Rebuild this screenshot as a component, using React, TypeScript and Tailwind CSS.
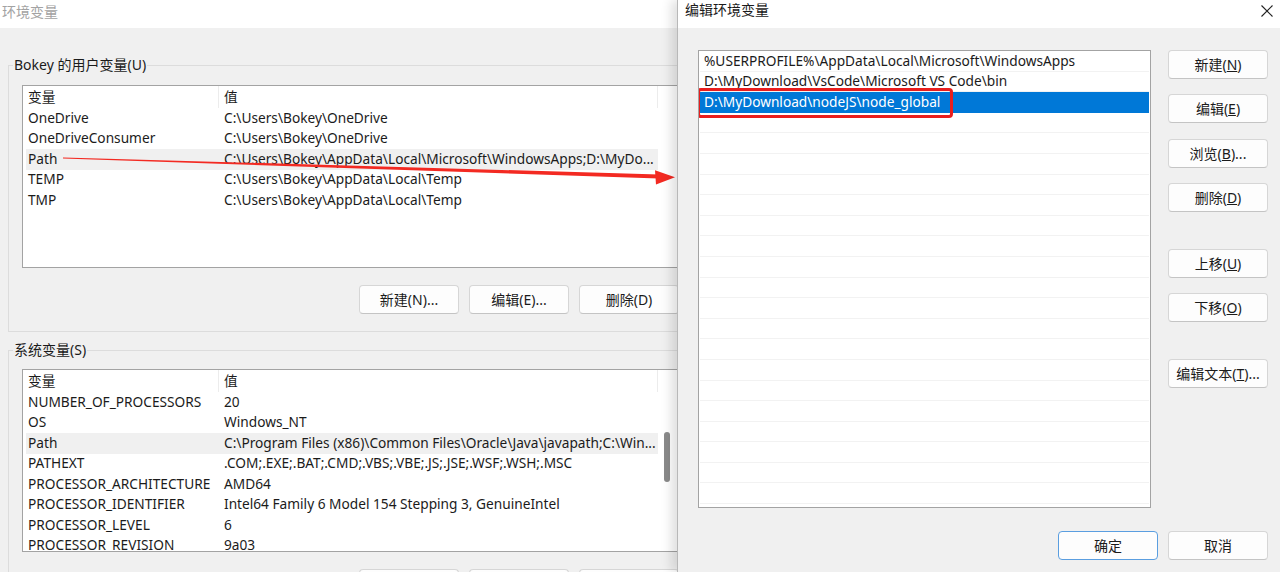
import React from "react";

type Row = { name: string; value: string; hover?: boolean };

const userVars: Row[] = [
  { name: "OneDrive", value: "C:\\Users\\Bokey\\OneDrive" },
  { name: "OneDriveConsumer", value: "C:\\Users\\Bokey\\OneDrive" },
  {
    name: "Path",
    value: "C:\\Users\\Bokey\\AppData\\Local\\Microsoft\\WindowsApps;D:\\MyDo...",
    hover: true,
  },
  { name: "TEMP", value: "C:\\Users\\Bokey\\AppData\\Local\\Temp" },
  { name: "TMP", value: "C:\\Users\\Bokey\\AppData\\Local\\Temp" },
];

const systemVars: Row[] = [
  { name: "NUMBER_OF_PROCESSORS", value: "20" },
  { name: "OS", value: "Windows_NT" },
  {
    name: "Path",
    value: "C:\\Program Files (x86)\\Common Files\\Oracle\\Java\\javapath;C:\\Win...",
    hover: true,
  },
  { name: "PATHEXT", value: ".COM;.EXE;.BAT;.CMD;.VBS;.VBE;.JS;.JSE;.WSF;.WSH;.MSC" },
  { name: "PROCESSOR_ARCHITECTURE", value: "AMD64" },
  { name: "PROCESSOR_IDENTIFIER", value: "Intel64 Family 6 Model 154 Stepping 3, GenuineIntel" },
  { name: "PROCESSOR_LEVEL", value: "6" },
  { name: "PROCESSOR_REVISION", value: "9a03" },
];

const pathEntries = [
  "%USERPROFILE%\\AppData\\Local\\Microsoft\\WindowsApps",
  "D:\\MyDownload\\VsCode\\Microsoft VS Code\\bin",
  "D:\\MyDownload\\nodeJS\\node_global",
];

const WinButton = ({
  children,
  className = "",
  primary = false,
}: {
  children: React.ReactNode;
  className?: string;
  primary?: boolean;
}) => (
  <div
    className={[
      "flex h-[29px] w-[100px] shrink-0 items-center justify-center rounded-[4px] border bg-[#fdfdfd] text-[14px] text-[#1b1b1b]",
      primary ? "border-[#5a9ee0]" : "border-[#d6d6d6] border-b-[#c4c4c4]",
      className,
    ].join(" ")}
  >
    {children}
  </div>
);

const VarList = ({ rows, scrollbar }: { rows: Row[]; scrollbar?: boolean }) => (
  <div className="ml-[13px] flex h-[183px] w-[700px] overflow-hidden border border-[#a3a3a3] bg-white text-[13.7px]">
    <div className="w-[635px] shrink-0">
      <div className="flex h-[22px] items-center">
        <div className="h-full w-[196px] border-r border-[#ececec] pl-[5px] leading-[21px]">变量</div>
        <div className="h-full flex-1 border-r border-[#ececec] pl-[5px] leading-[21px]">值</div>
      </div>
      {rows.map((row) => (
        <div
          key={row.name}
          className={[
            "ml-[3px] flex h-[20.5px] items-center whitespace-nowrap",
            row.hover ? "bg-[#f0f0f0]" : "",
          ].join(" ")}
        >
          <div className="w-[193px] shrink-0 pl-[2px]">{row.name}</div>
          <div className="pl-[5px]">{row.value}</div>
        </div>
      ))}
    </div>
    <div className="w-[17px] shrink-0 pl-[6px] pt-[62px]">
      {scrollbar && <div className="h-[50px] w-[6px] rounded-full bg-[#8a8a8a]" />}
    </div>
  </div>
);

const LeftButtons = () => (
  <div className="mt-[17px] flex gap-[10px] pl-[350px]">
    <WinButton className="h-[28px]">新建(N)...</WinButton>
    <WinButton className="h-[28px]">编辑(E)...</WinButton>
    <WinButton className="h-[28px]">删除(D)</WinButton>
  </div>
);

export default function App() {
  return (
    <div className="relative flex h-[572px] w-[1280px] overflow-hidden bg-[#f0f0f0] font-['Noto_Sans','Noto_Sans_CJK_SC',sans-serif] text-[14px] text-[#1b1b1b]">
      {/* 环境变量 (inactive window behind) */}
      <div className="flex h-full w-[677px] shrink-0 flex-col overflow-hidden">
        <div className="h-[28px] shrink-0 bg-white pl-[2px] pt-[2px] leading-[20px] text-[#a3a3a3]">
          环境变量
        </div>
        <div className="flex flex-col pl-[8px] pt-[27px]">
          <fieldset className="w-[720px] border border-[#dcdcdc] pb-[17px]">
            <legend className="ml-[4px] px-[1px] leading-[20px]">Bokey 的用户变量(U)</legend>
            <div className="mt-[10px]">
              <VarList rows={userVars} />
            </div>
            <LeftButtons />
          </fieldset>
          <fieldset className="mt-[8px] w-[720px] border border-[#dcdcdc] pb-[17px]">
            <legend className="ml-[4px] px-[1px] leading-[20px]">系统变量(S)</legend>
            <div className="mt-[9px]">
              <VarList rows={systemVars} scrollbar />
            </div>
            <LeftButtons />
          </fieldset>
        </div>
      </div>

      <svg
        className="pointer-events-none absolute left-0 top-0"
        width="1280"
        height="572"
        viewBox="0 0 1280 572"
      >
        <polygon points="63,157.4 63,158.6 659,178.6 659,174.4" fill="#f32a22" />
        <polygon points="655,170.2 675,177.2 656,184.6" fill="#f32a22" />
      </svg>

      {/* 编辑环境变量 (active dialog) */}
      <div className="relative flex h-full flex-1 flex-col border-l border-[#b8b8b8] shadow-[-6px_0_10px_rgba(0,0,0,0.12)]">
        <div className="flex h-[28px] shrink-0 items-start justify-between bg-white pl-[7px] pr-[8px]">
          <span className="leading-[20px] text-[#1b1b1b]">编辑环境变量</span>
          <svg className="mt-[5px]" width="12" height="12" viewBox="0 0 12 12">
            <path d="M0.5 0.5 L11.5 11.5 M11.5 0.5 L0.5 11.5" stroke="#222" strokeWidth="1.1" />
          </svg>
        </div>
        <div className="flex flex-1 flex-col bg-[#f0f0f0] pl-[20px] pr-[13px] pt-[22px]">
          <div className="flex gap-[17px]">
            <div className="relative h-[458px] w-[453px] shrink-0 overflow-hidden border border-[#a3a3a3] bg-white px-px text-[13.7px]">
              {Array.from({ length: 23 }).map((_, i) => {
                const text = pathEntries[i];
                const selected = i === 2;
                return (
                  <div
                    key={i}
                    className={[
                      "flex h-[20.6px] items-center whitespace-nowrap border-b pl-[4px]",
                      selected
                        ? "border-[#0078d7] bg-[#0078d7] text-white"
                        : "border-[#f2f2f2]",
                    ].join(" ")}
                  >
                    {text ?? ""}
                  </div>
                );
              })}
              <div className="absolute left-[-2px] top-[37px] h-[30px] w-[256px] rounded-[4px] border-[3px] border-[#e81e1e]" />
            </div>
            <div className="flex flex-col">
              <WinButton>
                新建(<span className="underline">N</span>)
              </WinButton>
              <WinButton className="mt-[15px]">
                编辑(<span className="underline">E</span>)
              </WinButton>
              <WinButton className="mt-[16px]">
                浏览(<span className="underline">B</span>)...
              </WinButton>
              <WinButton className="mt-[15px]">
                删除(<span className="underline">D</span>)
              </WinButton>
              <WinButton className="mt-[37px]">
                上移(<span className="underline">U</span>)
              </WinButton>
              <WinButton className="mt-[15px]">
                下移(<span className="underline">O</span>)
              </WinButton>
              <WinButton className="mt-[37px]">
                编辑文本(<span className="underline">T</span>)...
              </WinButton>
            </div>
          </div>
          <div className="mt-[23px] flex justify-end gap-[10px]">
            <WinButton primary>确定</WinButton>
            <WinButton>取消</WinButton>
          </div>
        </div>
      </div>
    </div>
  );
}
